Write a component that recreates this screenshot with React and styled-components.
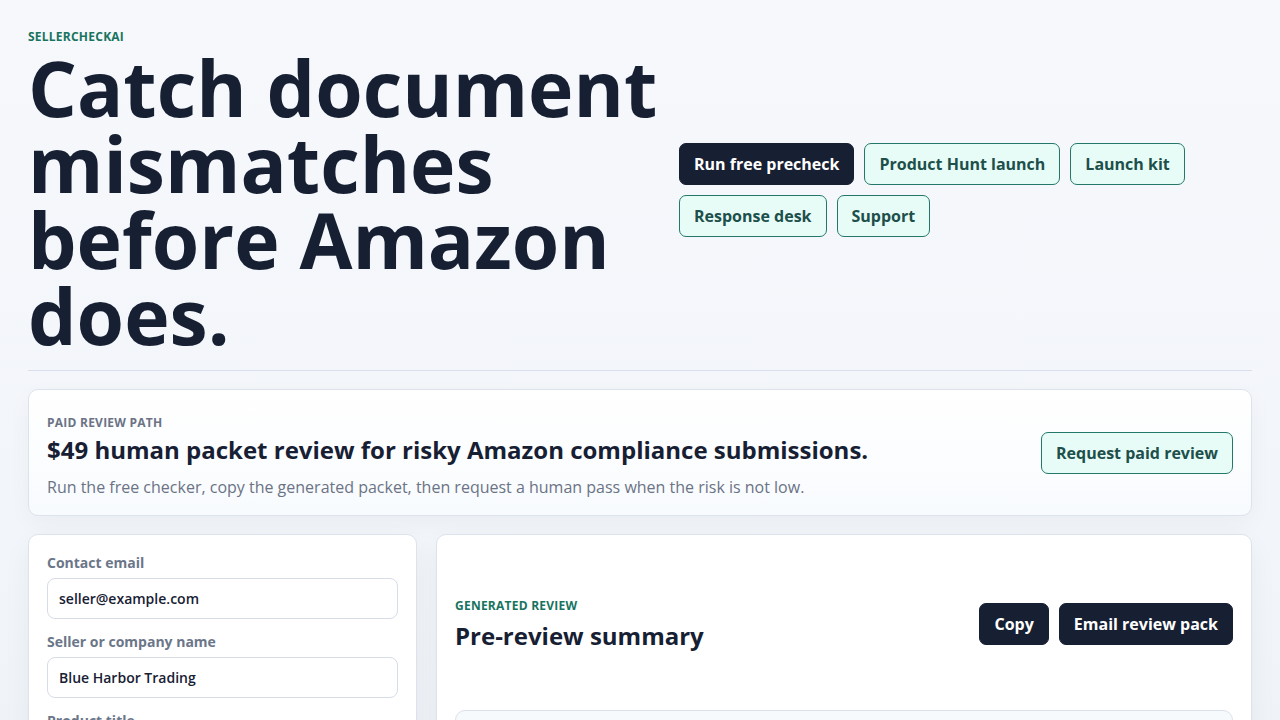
import React from "react";
import styled, { createGlobalStyle } from "styled-components";

const GlobalStyle = createGlobalStyle`
  html, body {
    margin: 0;
    padding: 0;
  }
  body {
    font-family: "Open Sans", "Noto Sans", sans-serif;
    color: #172033;
    background: linear-gradient(180deg, #f6f8fc 0%, #f2f5f9 60%, #eceff4 100%);
    min-height: 100vh;
  }
  * {
    box-sizing: border-box;
  }
`;

const Page = styled.div`
  padding: 28px 28px 40px;
`;

const Hero = styled.header`
  display: grid;
  grid-template-columns: 640px 1fr;
  column-gap: 11px;
  align-items: center;
  padding-bottom: 16px;
  border-bottom: 1px solid #d9dfea;
`;

const Eyebrow = styled.div`
  font-size: 12px;
  font-weight: 700;
  letter-spacing: 0.02em;
  text-transform: uppercase;
  color: ${(p) => p.color || "#17735f"};
`;

const Headline = styled.h1`
  margin: 5px 0 0;
  font-size: 76.8px;
  line-height: 76px;
  font-weight: 700;
  color: #172033;
`;

const Actions = styled.nav`
  display: flex;
  flex-wrap: wrap;
  gap: 10px;
  margin-top: -2px;
`;

const Button = styled.button`
  font-family: inherit;
  font-size: 16px;
  font-weight: 700;
  height: 42px;
  padding: 0 14px;
  border-radius: 7px;
  cursor: pointer;
  border: 1px solid ${(p) => (p.$dark ? "#172033" : "#23786a")};
  background: ${(p) => (p.$dark ? "#172033" : "#e7fcf7")};
  color: ${(p) => (p.$dark ? "#ffffff" : "#1d4f4b")};
  white-space: nowrap;
`;

const PaidButton = styled(Button)`
  margin-bottom: 7px;
`;

const PaidCard = styled.section`
  margin-top: 18px;
  display: flex;
  align-items: center;
  justify-content: space-between;
  padding: 24px 18px 17px;
  border: 1px solid #dde3ec;
  border-radius: 10px;
  background: linear-gradient(180deg, #ffffff 0%, #f8fbfe 100%);
  box-shadow: 0 8px 24px rgba(23, 32, 51, 0.04);
`;

const PaidText = styled.div`
  display: flex;
  flex-direction: column;
`;

const PaidTitle = styled.h2`
  margin: 3px 0 0;
  font-size: 24px;
  line-height: 32px;
  font-weight: 700;
  color: #172033;
`;

const PaidSub = styled.p`
  margin: 10px 0 0;
  font-size: 16px;
  line-height: 22px;
  color: #6b7385;
`;

const Workspace = styled.div`
  margin-top: 18px;
  display: grid;
  grid-template-columns: 389px 1fr;
  gap: 19px;
  align-items: start;
`;

const Card = styled.section`
  background: #ffffff;
  border: 1px solid #dde3ec;
  border-radius: 10px;
  padding: 18px;
  box-shadow: 0 10px 28px rgba(23, 32, 51, 0.05);
`;

const Field = styled.label`
  display: flex;
  flex-direction: column;
  gap: 5px;
  margin-bottom: 13px;
`;

const Label = styled.span`
  font-size: 14px;
  font-weight: 700;
  color: #6b7689;
  line-height: 20px;
`;

const Input = styled.input`
  height: 41px;
  padding: 0 11px;
  font-family: inherit;
  font-size: 14px;
  font-weight: 600;
  color: #172033;
  border: 1px solid #d6dde8;
  border-radius: 8px;
  background: #ffffff;
  outline: none;
`;

const ReviewHead = styled.div`
  display: flex;
  align-items: center;
  justify-content: space-between;
  margin-top: 44px;
`;

const ReviewTitle = styled.h3`
  margin: 6px 0 0;
  font-size: 24px;
  line-height: 32px;
  font-weight: 700;
  color: #172033;
`;

const ButtonRow = styled.div`
  display: flex;
  gap: 10px;
  margin-top: -2px;
`;

const SummaryBox = styled.div`
  margin-top: 58px;
  height: 160px;
  border: 1px solid #dbe2ec;
  border-radius: 10px;
  background: #f7fafd;
`;

function App() {
  return (
    <>
      <GlobalStyle />
      <Page>
        <Hero>
          <div>
            <Eyebrow>SellerCheckAI</Eyebrow>
            <Headline>Catch document mismatches before Amazon does.</Headline>
          </div>
          <Actions>
            <Button $dark>Run free precheck</Button>
            <Button>Product Hunt launch</Button>
            <Button>Launch kit</Button>
            <Button>Response desk</Button>
            <Button>Support</Button>
          </Actions>
        </Hero>

        <PaidCard>
          <PaidText>
            <Eyebrow color="#6b7385">Paid review path</Eyebrow>
            <PaidTitle>
              $49 human packet review for risky Amazon compliance submissions.
            </PaidTitle>
            <PaidSub>
              Run the free checker, copy the generated packet, then request a
              human pass when the risk is not low.
            </PaidSub>
          </PaidText>
          <PaidButton>Request paid review</PaidButton>
        </PaidCard>

        <Workspace>
          <Card>
            <Field>
              <Label>Contact email</Label>
              <Input defaultValue="seller@example.com" />
            </Field>
            <Field>
              <Label>Seller or company name</Label>
              <Input defaultValue="Blue Harbor Trading" />
            </Field>
            <Field>
              <Label>Product title</Label>
              <Input defaultValue="" />
            </Field>
          </Card>
          <Card>
            <ReviewHead>
              <div>
                <Eyebrow>Generated review</Eyebrow>
                <ReviewTitle>Pre-review summary</ReviewTitle>
              </div>
              <ButtonRow>
                <Button $dark>Copy</Button>
                <Button $dark>Email review pack</Button>
              </ButtonRow>
            </ReviewHead>
            <SummaryBox />
          </Card>
        </Workspace>
      </Page>
    </>
  );
}

export default App;
